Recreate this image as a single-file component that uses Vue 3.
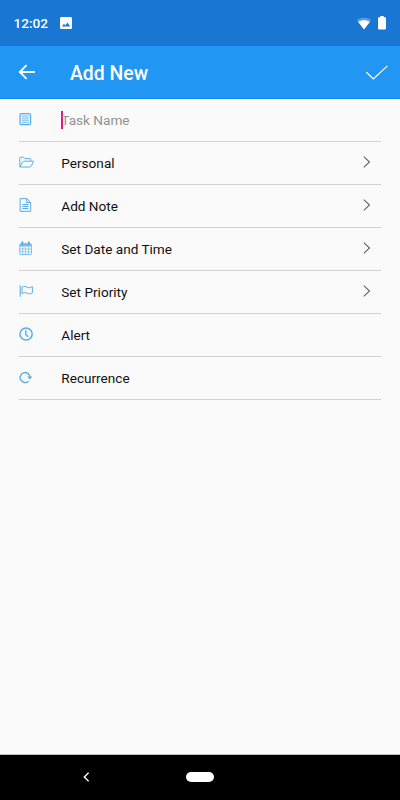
<script setup>
const rows = [
  { icon: 'list', label: 'Task Name', input: true },
  { icon: 'folder', label: 'Personal', chevron: true },
  { icon: 'note', label: 'Add Note', chevron: true },
  { icon: 'calendar', label: 'Set Date and Time', chevron: true },
  { icon: 'flag', label: 'Set Priority', chevron: true },
  { icon: 'clock', label: 'Alert' },
  { icon: 'repeat', label: 'Recurrence' },
]
</script>

<template>
  <div class="screen">
    <div class="status">
      <span class="time">12:02</span>
      <svg class="photo" width="12" height="12" viewBox="0 0 12 12">
        <rect width="12" height="12" rx="1.3" fill="#fff" />
        <path d="M1.9 9.5 4 6.7l1.4 1.7 2.1-2.8 2.6 3.9z" fill="#1976d2" />
      </svg>
      <svg class="wifi" width="16" height="13" viewBox="0 0 16 13">
        <path d="M8 12.5.7 3.1C4.8.1 11.2.1 15.3 3.1z" fill="#5b9de0" />
        <path d="M8 12.5 2.2 5c3.3-2.5 8.3-2.5 11.6 0z" fill="#fff" />
      </svg>
      <svg class="battery" width="8" height="14" viewBox="0 0 8 14">
        <path d="M2.3 0h3.4v1.3H7q1 0 1 1V12.6q0 1-1 1H1q-1 0-1-1V2.3q0-1 1-1h1.3z" fill="#fff" />
      </svg>
    </div>

    <header class="bar">
      <svg class="back" width="18" height="16" viewBox="0 0 18 16" fill="none" stroke="#fff" stroke-width="1.8">
        <path d="M16.8 8H2.2M8.6 1.2 1.8 8l6.8 6.8" />
      </svg>
      <h1>Add New</h1>
      <svg class="check" width="23" height="16" viewBox="0 0 23 16" fill="none" stroke="#fff" stroke-width="1.2">
        <path d="M.4 7.2 7.4 13.9 21.4 .9" />
      </svg>
    </header>

    <main class="list">
      <div v-for="row in rows" :key="row.icon" class="row">
        <svg class="icon" width="16" height="16" viewBox="0 0 16 16" fill="none" stroke="#58aee6" stroke-width="1">
          <template v-if="row.icon === 'list'">
            <rect x="1" y="2.6" width="10.6" height="11" rx="1.3" stroke-width="1.2" fill="#e4f2fc" />
            <path d="M3 5h6.7M3 7.1h6.7M3 9.2h6.7M3 11.3h6.7" stroke-width=".75" />
          </template>
          <template v-else-if="row.icon === 'folder'">
            <path d="M.8 12.8V4q0-.8.8-.8h3l1.3 1.5H11q.8 0 .8.8v1.6M.9 12.8l3.1-5.1q.3-.5.9-.5h9.2q.8 0 .4.7l-2.7 4.6q-.3.5-.9.5H1.2q-.7 0-.3-.4" stroke-width="1" />
          </template>
          <template v-else-if="row.icon === 'note'">
            <path d="M1.1 1.6h6.6l4 3.8v8.9H1.1zM7.7 1.7v3.8h3.9" />
            <path d="M3.3 7.5h6M3.3 9.5h6M3.3 11.5h6" />
          </template>
          <template v-else-if="row.icon === 'calendar'">
            <rect x=".8" y="3.8" width="11.6" height="10.8" rx=".8" stroke-width=".8" />
            <path d="M1 3.6h11.2v2.4H1z" fill="#7cbeea" stroke="none" />
            <path d="M.8 6.1h11.6M.8 9h11.6M.8 11.8h11.6M3.7 6.1v8.5M6.6 6.1v8.5M9.5 6.1v8.5" stroke-width=".55" />
            <path d="M3.4 2.3v1.9M9.8 2.3v1.9" stroke-width="2" stroke-linecap="round" />
            <path d="M6.6 2.9v.9" stroke-width="1.2" />
          </template>
          <template v-else-if="row.icon === 'flag'">
            <path d="M1.2 2.2v11.6" stroke-width="1.1" />
            <path d="M3 4.2c2.1-1.5 3.5-.9 5 0s3 .6 5.4-.6v6.3c-2.4 1.3-3.9 1.1-5.4.3s-2.9-.8-5 .5z" stroke-width="1" />
          </template>
          <template v-else-if="row.icon === 'clock'">
            <circle cx="7.1" cy="8" r="6.1" stroke-width="1.5" />
            <path d="M6.8 4.2v4.3l2.3 2.3" stroke-width="1.4" />
          </template>
          <template v-else>
            <path d="M9.6 12.2a5 5 0 1 1 1.5-4.3" stroke-width="1.4" />
            <path d="M8.2 7.5h5.2l-2.6 3z" fill="#58aee6" stroke="none" />
          </template>
        </svg>
        <span v-if="row.input" class="label placeholder"><i class="caret"></i>{{ row.label }}</span>
        <span v-else class="label">{{ row.label }}</span>
        <svg v-if="row.chevron" class="chevron" width="8" height="12" viewBox="0 0 8 12" fill="none" stroke="#626262" stroke-width="1.1">
          <path d="M.8.6 6.5 6 .8 11.4" />
        </svg>
      </div>
    </main>

    <footer class="nav">
      <svg class="navback" width="6" height="10" viewBox="0 0 6 10" fill="none" stroke="#fff" stroke-width="1.4">
        <path d="M5.6.7 1.3 5l4.3 4.3" />
      </svg>
      <span class="home"></span>
    </footer>
  </div>
</template>

<style>
body {
  background: #fafafa;
}
</style>

<style scoped>
.screen {
  display: flex;
  flex-direction: column;
  width: 400px;
  height: 800px;
  background: #fafafa;
  font-family: Roboto, sans-serif;
}
svg {
  display: block;
  flex: none;
}
.status {
  display: flex;
  align-items: center;
  box-sizing: border-box;
  height: 46px;
  padding: 0 14px 0 13.5px;
  background: #1976d2;
}
.time {
  width: 46.5px;
  color: #fff;
  font-size: 13.6px;
  font-weight: 500;
}
.wifi {
  margin-left: auto;
}
.battery {
  margin-left: 6px;
}
.bar {
  display: flex;
  align-items: center;
  box-sizing: border-box;
  height: 53px;
  padding: 0 12px 0 18px;
  border-bottom: 1px solid #0d8bee;
  background: #2196f3;
}
h1 {
  margin: 3px 0 0 34px;
  color: #fff;
  font-size: 19.4px;
  font-weight: 500;
  line-height: 24px;
}
.check {
  margin: 1px -1px 0 auto;
}
.list {
  flex: 1;
  padding: 0 19px;
}
.row {
  display: flex;
  align-items: center;
  box-sizing: border-box;
  height: 43px;
  border-bottom: 1px solid #d2d2d2;
}
.icon {
  margin-bottom: 2px;
}
.label {
  display: flex;
  align-items: center;
  height: 18px;
  margin-left: 26.3px;
  color: #111;
  font-size: 13.6px;
  line-height: 18px;
  white-space: pre;
}
.placeholder {
  color: #929292;
}
.caret {
  width: 2px;
  height: 18px;
  margin: 0 -2px 1px 0;
  background: #ec1380;
}
.chevron {
  margin: 0 10px 2px auto;
}
.nav {
  display: flex;
  align-items: center;
  box-sizing: border-box;
  height: 46px;
  padding: 0 0 2px 83px;
  border-top: 1px solid #b9bdb9;
  background: #000;
}
.home {
  width: 28px;
  height: 10px;
  margin-left: 97px;
  border-radius: 5px;
  background: #fff;
}
</style>
